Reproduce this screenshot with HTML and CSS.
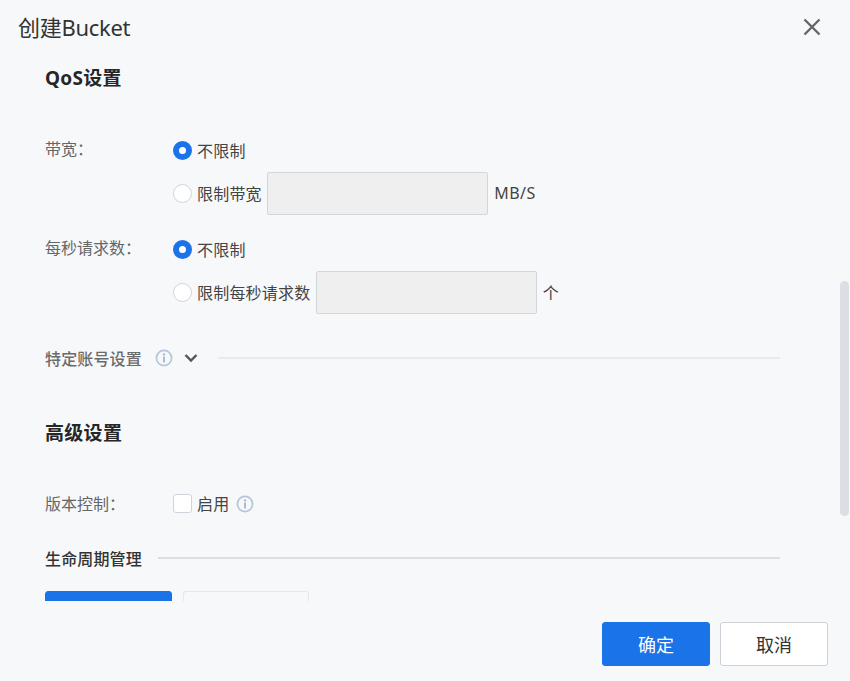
FILE: index.html
```html
<!DOCTYPE html>
<html lang="zh-CN">
<head>
    <meta charset="UTF-8">
    <title>创建Bucket</title>
    <link rel="stylesheet" href="styles.css">
</head>
<body>
    <div class="dialog">
        <div class="head">
            <span class="title">创建Bucket</span>
            <svg class="close" width="18" height="18" viewBox="0 0 18 18"><path d="M1.5 1.5L16.5 16.5M16.5 1.5L1.5 16.5" stroke="#666" stroke-width="2.4" fill="none"/></svg>
        </div>

        <div class="body">
            <h3 class="section qos">QoS设置</h3>

            <div class="row">
                <div class="label">带宽：</div>
                <div class="options">
                    <div class="option"><span class="radio on"></span>不限制</div>
                    <div class="option"><span class="radio"></span>限制带宽<span class="input"></span><span class="unit">MB/S</span></div>
                </div>
            </div>

            <div class="row second">
                <div class="label">每秒请求数：</div>
                <div class="options">
                    <div class="option"><span class="radio on"></span>不限制</div>
                    <div class="option"><span class="radio"></span>限制每秒请求数<span class="input"></span><span class="unit">个</span></div>
                </div>
            </div>

            <div class="divider account">
                <span class="divider-text muted">特定账号设置</span>
                <svg class="info" width="18" height="18" viewBox="0 0 18 18"><circle cx="9" cy="9" r="7.6" fill="none" stroke="#b5c6da" stroke-width="1.7"/><circle cx="9" cy="5.4" r="1.2" fill="#a9bcd3"/><rect x="8" y="7.6" width="2" height="5.8" fill="#a9bcd3"/></svg>
                <svg class="chevron" width="14" height="10" viewBox="0 0 14 10"><path d="M1.5 2L7 7.5L12.5 2" stroke="#555" stroke-width="2.4" fill="none"/></svg>
                <span class="line light"></span>
            </div>

            <h3 class="section advanced">高级设置</h3>

            <div class="row version">
                <div class="label">版本控制：</div>
                <div class="option check-option">
                    <span class="checkbox"></span>启用
                    <svg class="info" width="18" height="18" viewBox="0 0 18 18"><circle cx="9" cy="9" r="7.6" fill="none" stroke="#b5c6da" stroke-width="1.7"/><circle cx="9" cy="5.4" r="1.2" fill="#a9bcd3"/><rect x="8" y="7.6" width="2" height="5.8" fill="#a9bcd3"/></svg>
                </div>
            </div>

            <div class="divider life">
                <span class="divider-text">生命周期管理</span>
                <span class="line"></span>
            </div>

            <div class="tabs">
                <div class="tab active"></div>
                <div class="tab"></div>
            </div>
        </div>

        <div class="foot">
            <button class="btn primary">确定</button>
            <button class="btn">取消</button>
        </div>

        <div class="scrollbar"></div>
    </div>
</body>
</html>
```

FILE: styles.css
```css
*{
    box-sizing: border-box;
}

body{
    margin: 0;
    padding: 0;

    font-size: 16px;
    font-family: "Noto Sans", "Noto Sans CJK SC", sans-serif;
    color: #333;

    background-color: #f7f8fa;
}

.dialog{
    position: relative;

    height: 681px;

    display: flex;
    flex-direction: column;

    overflow: hidden;
}

.head{
    flex: none;
    height: 54px;
    padding: 0 29px 0 18px;

    display: flex;
    align-items: center;
    justify-content: space-between;
}
.title{
    margin-bottom: 3px;

    font-size: 22px;
    letter-spacing: -0.3px;
    color: #333;
}

.body{
    flex: 1;
    min-height: 0;
    padding: 0 70px 0 45px;

    overflow: hidden;
}

.section{
    margin: 0;

    font-size: 19px;
    line-height: 26px;
    font-weight: 700;
    letter-spacing: 0.3px;
    color: #262626;
}
.qos{
    margin-top: 11px;
    margin-bottom: 38px;
}
.advanced{
    margin-top: 47px;
}

.row{
    display: flex;
}
.second{
    margin-top: 13px;
}
.version{
    margin-top: 36px;
    align-items: center;
}

.label{
    flex: none;
    width: 128px;

    line-height: 40px;
    color: #666;
}

.option{
    height: 43px;
    padding-bottom: 2px;

    display: flex;
    align-items: center;

    letter-spacing: 0.2px;
    color: #444;
}

.radio{
    width: 19px;
    height: 19px;
    margin: 2px 5px 0 0;

    border: 1px solid #cfd4dc;
    border-radius: 50%;

    background-color: #fff;
}
.radio.on{
    border: 6px solid #1a73e8;
}

.input{
    flex: none;
    width: 221px;
    height: 43px;
    margin: 2px 6px 0 5.4px;

    border: 1px solid #d3d6dc;
    border-radius: 2px;

    background-color: #efefef;
}

.unit{
    letter-spacing: 0.5px;
}

.checkbox{
    width: 19px;
    height: 19px;
    margin: 2px 5px 0 0;

    border: 1px solid #cfd4dc;
    border-radius: 3px;

    background-color: #fff;
}

.check-option .info{
    margin: 2px 0 0 7px;
}

.divider{
    display: flex;
    align-items: center;
}
.account{
    height: 30px;
    margin-top: 29px;
}
.life{
    height: 30px;
    margin-top: 18px;
}
.divider-text{
    font-weight: 500;
    letter-spacing: 0.15px;
    color: #333;
}
.divider-text.muted{
    color: #6b6b6b;
}
.account .info{
    margin-left: 13px;
}
.chevron{
    margin-left: 11px;
}
.line{
    flex: 1;
    height: 2px;
    margin-left: 16px;

    background-color: #dcdee6;
}
.line.light{
    margin-left: 20px;

    background-color: #e8eaf0;
}

.tabs{
    margin-top: 18px;

    display: flex;
    gap: 11px;
}
.tab{
    width: 126px;
    height: 44px;

    border: 1px solid #e4e6ec;
    border-radius: 3px;

    background-color: #f7f8fa;
}
.tab.active{
    width: 127px;

    border-color: #1a73e8;

    background-color: #1a73e8;
}

.foot{
    flex: none;
    height: 80px;
    padding: 21px 22px 0 0;

    display: flex;
    justify-content: flex-end;
    gap: 10px;
}
.btn{
    width: 108px;
    height: 44px;
    padding: 0;

    border: 1px solid #cdd1d8;
    border-radius: 3px;

    background-color: #fff;

    font-size: 18px;
    font-family: inherit;
    color: #333;
}
.btn.primary{
    border-color: #1a73e8;

    background-color: #1a73e8;

    color: #fff;
}

/* overlay scrollbar */
.scrollbar{
    position: absolute;
    top: 281px;
    right: 1px;

    width: 9px;
    height: 235px;

    border-radius: 5px;

    background-color: #dcdee6;
}
```
